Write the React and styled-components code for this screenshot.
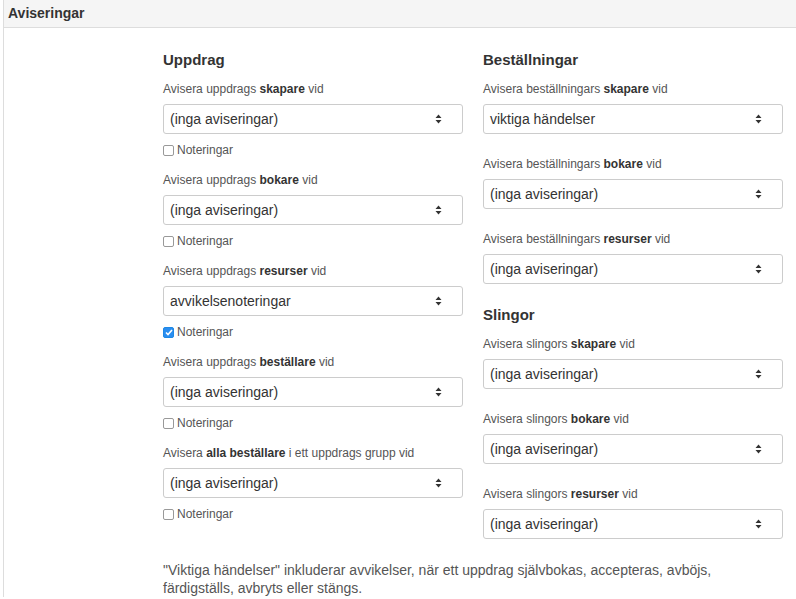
import React from "react";
import styled, { createGlobalStyle } from "styled-components";

const Global = createGlobalStyle`
  html, body { margin: 0; padding: 0; background: #fff; overflow: hidden; }
  body { font-family: "Liberation Sans", Arial, sans-serif; color: #333; }
`;

const Panel = styled.div`
  margin-left: 3px;
  width: 820px;
  border-left: 1px solid #ddd;
`;
const Header = styled.div`
  height: 28px;
  box-sizing: border-box;
  background: #f5f5f5;
  border-bottom: 1px solid #ddd;
  padding: 0 4px;
  font-size: 14px;
  font-weight: bold;
  line-height: 27px;
  color: #333;
`;
const Body = styled.div`
  padding: 23px 0 0 159px;
`;
const Columns = styled.div`
  display: grid;
  grid-template-columns: 300px 300px;
  column-gap: 20px;
  align-items: start;
`;
const Col = styled.div``;
const Heading = styled.div`
  font-size: 15px;
  font-weight: bold;
  line-height: 17px;
  color: #333;
  margin-bottom: 13px;
`;
const Field = styled.div`
  margin-bottom: ${p => (p.$check ? "14px" : "22px")};
`;
const Label = styled.div`
  font-size: 12px;
  line-height: 17px;
  color: #555;
  margin-bottom: 6px;
  b { color: #333; }
`;
const Select = styled.div`
  height: 30px;
  box-sizing: border-box;
  border: 1px solid #ccc;
  border-radius: 3px;
  background: #fff;
  display: flex;
  align-items: center;
  justify-content: space-between;
  padding: 0 20px 0 6px;
  font-size: 14px;
  color: #333;
`;
const CheckRow = styled.label`
  display: flex;
  align-items: center;
  margin-top: 8px;
  height: 16px;
  font-size: 12px;
  color: #555;
`;
const Box = styled.span`
  width: 11px;
  height: 11px;
  box-sizing: border-box;
  border-radius: 2px;
  border: 1px solid ${p => (p.$on ? "#1e88e5" : "#999")};
  background: ${p => (p.$on ? "#2a8ef0" : "#fff")};
  margin-right: 3px;
  display: flex;
  align-items: center;
  justify-content: center;
`;
const Footer = styled.div`
  font-size: 14px;
  line-height: 18px;
  color: #555;
  width: 600px;
`;

const Arrows = () => (
  <svg width="7" height="10" viewBox="0 0 7 10">
    <path d="M3.5 0.5 L6.5 4 H0.5 Z M3.5 9.5 L6.5 6 H0.5 Z" fill="#333" />
  </svg>
);

const Sel = ({ v }) => (
  <Select>
    <span>{v}</span>
    <Arrows />
  </Select>
);

const Check = ({ on }) => (
  <CheckRow>
    <Box $on={on}>
      {on && (
        <svg width="8" height="7" viewBox="0 0 8 7">
          <path d="M1 3.5 L3 5.5 L7 1" stroke="#fff" strokeWidth="1.6" fill="none" />
        </svg>
      )}
    </Box>
    Noteringar
  </CheckRow>
);

const none = "(inga aviseringar)";
const left = [
  [<>Avisera uppdrags <b>skapare</b> vid</>, none, false],
  [<>Avisera uppdrags <b>bokare</b> vid</>, none, false],
  [<>Avisera uppdrags <b>resurser</b> vid</>, "avvikelsenoteringar", true],
  [<>Avisera uppdrags <b>beställare</b> vid</>, none, false],
  [<>Avisera <b>alla beställare</b> i ett uppdrags grupp vid</>, none, false],
];
const best = [
  [<>Avisera beställningars <b>skapare</b> vid</>, "viktiga händelser"],
  [<>Avisera beställningars <b>bokare</b> vid</>, none],
  [<>Avisera beställningars <b>resurser</b> vid</>, none],
];
const sling = [
  [<>Avisera slingors <b>skapare</b> vid</>, none],
  [<>Avisera slingors <b>bokare</b> vid</>, none],
  [<>Avisera slingors <b>resurser</b> vid</>, none],
];

export default function App() {
  return (
    <>
      <Global />
      <Panel>
        <Header>Aviseringar</Header>
        <Body>
          <Columns>
            <Col>
              <Heading>Uppdrag</Heading>
              {left.map(([l, v, c], i) => (
                <Field key={i} $check>
                  <Label>{l}</Label>
                  <Sel v={v} />
                  <Check on={c} />
                </Field>
              ))}
            </Col>
            <Col>
              <Heading>Beställningar</Heading>
              {best.map(([l, v], i) => (
                <Field key={i}>
                  <Label>{l}</Label>
                  <Sel v={v} />
                </Field>
              ))}
              <Heading>Slingor</Heading>
              {sling.map(([l, v], i) => (
                <Field key={i}>
                  <Label>{l}</Label>
                  <Sel v={v} />
                </Field>
              ))}
            </Col>
          </Columns>
          <Footer>
            "Viktiga händelser" inkluderar avvikelser, när ett uppdrag självbokas, accepteras, avböjs, färdigställs, avbryts eller stängs.
          </Footer>
        </Body>
      </Panel>
    </>
  );
}
